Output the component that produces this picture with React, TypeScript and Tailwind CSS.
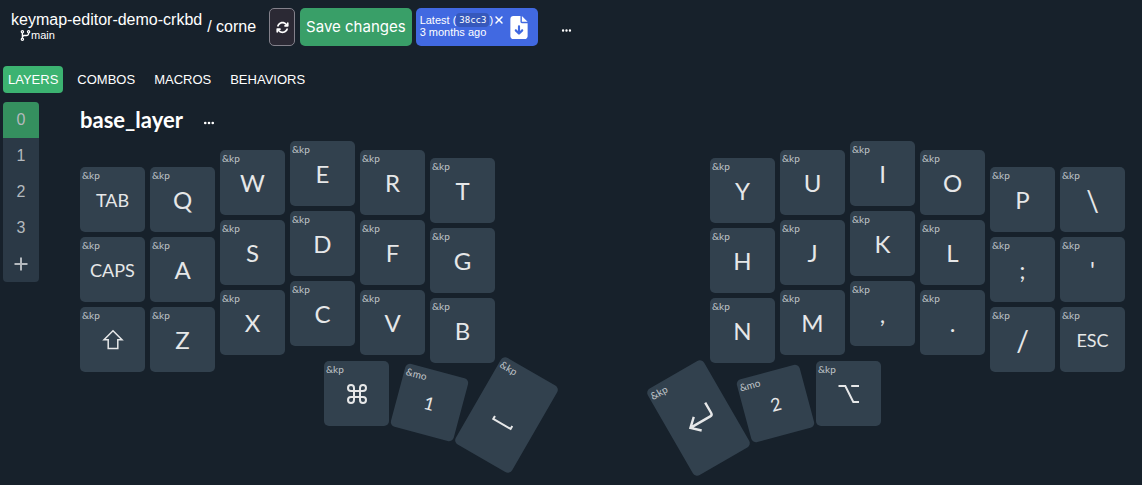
import type { ReactNode } from 'react';
import { FaArrowsRotate, FaCodeBranch, FaEllipsis, FaFileArrowDown, FaXmark } from 'react-icons/fa6';
import { Command } from 'lucide-react';

type KeyDef = {
  label: ReactNode;
  name: string;
  behavior?: string;
  size?: string;
  tall?: boolean;
  className?: string;
};

type Column = { offset: string; keys: KeyDef[] };

const key = (label: string, size?: string): KeyDef => ({ label, name: label, size });

function ShiftGlyph() {
  return (
    <svg className="size-6" viewBox="0 0 24 24" fill="none" stroke="currentColor" strokeWidth="1.5" aria-hidden="true">
      <path d="M12 2.8 21 11.8h-4.2v8.7H7.2v-8.7H3z" />
    </svg>
  );
}

function OptionGlyph() {
  return (
    <svg className="size-6" viewBox="0 0 24 24" fill="none" stroke="currentColor" strokeWidth="2" aria-hidden="true">
      <path d="M1.5 4h6.8l8 16H22M14.2 4H22" />
    </svg>
  );
}

function SpaceGlyph() {
  return (
    <svg className="size-6" viewBox="0 0 24 24" fill="none" stroke="currentColor" strokeWidth="2" aria-hidden="true">
      <path d="M2 18.6v3.4h20v-3.4" />
    </svg>
  );
}

function ReturnGlyph() {
  return (
    <svg className="size-8" viewBox="0 0 32 32" fill="none" stroke="currentColor" strokeWidth="2.4" aria-hidden="true">
      <path d="M29 6v12a2.5 2.5 0 0 1-2.5 2.5H4M12 12.6l-8.4 7.9 8.4 7.9" />
    </svg>
  );
}

const leftColumns: Column[] = [
  {
    offset: 'mt-[26px]',
    keys: [key('TAB', 'text-lg'), key('CAPS', 'text-lg'), { label: <ShiftGlyph />, name: 'Shift' }],
  },
  { offset: 'mt-[26px]', keys: [key('Q'), key('A'), key('Z')] },
  { offset: 'mt-[9px]', keys: [key('W'), key('S'), key('X')] },
  { offset: 'mt-0', keys: [key('E'), key('D'), key('C')] },
  { offset: 'mt-[9px]', keys: [key('R'), key('F'), key('V')] },
  { offset: 'mt-[17px]', keys: [key('T'), key('G'), key('B')] },
];

const rightColumns: Column[] = [
  { offset: 'mt-[17px]', keys: [key('Y'), key('H'), key('N')] },
  { offset: 'mt-[9px]', keys: [key('U'), key('J'), key('M')] },
  { offset: 'mt-0', keys: [key('I'), key('K'), key(',')] },
  { offset: 'mt-[9px]', keys: [key('O'), key('L'), key('.')] },
  { offset: 'mt-[26px]', keys: [key('P'), key(';'), key('/', 'text-[28px]')] },
  { offset: 'mt-[26px]', keys: [key('\\', 'text-[28px]'), key("'"), key('ESC', 'text-lg')] },
];

const leftThumbs: KeyDef[] = [
  { label: <Command className="size-6" strokeWidth={2} aria-hidden="true" />, name: 'Command' },
  { label: '1', name: 'Layer 1', behavior: '&mo', size: 'text-lg', className: 'mt-[9px] rotate-15' },
  { label: <SpaceGlyph />, name: 'Space', tall: true, className: 'ml-1 mt-1 rotate-30' },
];

const rightThumbs: KeyDef[] = [
  { label: <ReturnGlyph />, name: 'Return', tall: true, className: 'mr-1 mt-[7px] -rotate-30' },
  { label: '2', name: 'Layer 2', behavior: '&mo', size: 'text-lg', className: 'mt-[10px] -rotate-15' },
  { label: <OptionGlyph />, name: 'Option' },
];

function Key({ label, name, behavior = '&kp', size = 'text-2xl', tall, className = '' }: KeyDef) {
  return (
    <button
      type="button"
      aria-label={`${behavior} ${name}`}
      className={`relative flex w-[65px] shrink-0 items-center justify-center rounded-[5px] bg-[#32414e] text-[#e6e7e8] ${
        tall ? 'h-[100px]' : 'h-[65px]'
      } ${size} ${className}`}
    >
      <span className="absolute left-0.5 top-0.5 text-[10px] leading-3 text-[#c0c5c9]">{behavior}</span>
      {label}
    </button>
  );
}

function Columns({ columns }: { columns: Column[] }) {
  return (
    <div className="flex items-start gap-[5px]">
      {columns.map((column, i) => (
        <div key={i} className={`flex flex-col gap-[5px] ${column.offset}`}>
          {column.keys.map((k) => (
            <Key key={k.name} {...k} />
          ))}
        </div>
      ))}
    </div>
  );
}

function Header() {
  return (
    <header className="flex items-start pl-[11px] pt-2">
      <div className="pt-1">
        <a href="#repo" className="block text-base leading-4">keymap-editor-demo-crkbd</a>
        <a href="#branch" className="ml-[9px] flex items-center text-[11px] leading-[14px]">
          <FaCodeBranch className="size-[11px]" aria-hidden="true" />
          main
        </a>
      </div>
      <a href="#keyboard" className="ml-[5px] pt-2 text-base leading-[22px]">/ corne</a>
      <button
        type="button"
        aria-label="Refresh"
        className="ml-[13px] flex h-[38px] w-[26px] items-center justify-center rounded-[5px] border border-[#83818b] bg-[#2b2934]"
      >
        <FaArrowsRotate className="size-[13px]" />
      </button>
      <button
        type="button"
        className="ml-[5px] h-[38px] rounded-[5px] bg-[#399f68] px-1.5 font-['Inter',sans-serif] text-[15px]"
      >
        Save changes
      </button>
      <div className="ml-1 flex h-[38px] items-start gap-[5px] rounded-[5px] bg-[#4169e1] pl-1 pr-2.5 pt-1.5">
        <div className="text-[11px] leading-3">
          <div className="flex h-3 items-center">
            Latest (
            <code className="rounded bg-[#3658bb] px-[3px] font-['DejaVu_Sans_Mono',monospace] text-[9px] leading-[14px]">
              38cc3
            </code>
            )
            <button type="button" aria-label="Dismiss build">
              <FaXmark className="size-3" />
            </button>
          </div>
          <div>3 months ago</div>
        </div>
        <a href="#download" aria-label="Download firmware" className="pt-0.5">
          <FaFileArrowDown className="h-[23px] w-[18px]" />
        </a>
      </div>
      <button type="button" aria-label="More options" className="ml-[23px] mt-[17px]">
        <FaEllipsis className="size-[11px]" />
      </button>
    </header>
  );
}

const tabs = ['LAYERS', 'COMBOS', 'MACROS', 'BEHAVIORS'];
const layers = ['0', '1', '2', '3'];

export default function App() {
  return (
    <div className="min-h-screen overflow-x-hidden bg-[#17212b] font-['Liberation_Sans',Arial,sans-serif] text-white">
      <Header />
      <nav className="mt-5 flex gap-[9px] pl-[3px]">
        {tabs.map((tab, i) => (
          <button
            key={tab}
            type="button"
            className={`h-[27px] rounded px-[5px] text-[13px] ${i === 0 ? 'bg-[#3cb371]' : ''}`}
          >
            {tab}
          </button>
        ))}
      </nav>
      <main className="mt-[9px] flex items-start pl-[3px]">
        <div className="flex w-9 shrink-0 flex-col overflow-hidden rounded bg-[#2b3946] text-base text-[#b4b9be]">
          {layers.map((layer, i) => (
            <button key={layer} type="button" className={`h-9 ${i === 0 ? 'bg-[#35905f]' : ''}`}>
              {layer}
            </button>
          ))}
          <button type="button" aria-label="Add layer" className="flex h-9 items-center justify-center">
            <svg className="size-3.5" viewBox="0 0 14 14" stroke="currentColor" strokeWidth="2" aria-hidden="true">
              <path d="M7 .5v13M.5 7h13" />
            </svg>
          </button>
        </div>
        <section className="ml-[41px] font-['Lato',sans-serif]">
          <div className="flex h-[39px] items-start gap-5">
            <h1 className="text-[22px] font-bold leading-9">base_layer</h1>
            <button type="button" aria-label="Layer options" className="pt-[15px]">
              <FaEllipsis className="size-3" />
            </button>
          </div>
          <div className="flex items-start gap-[125px]">
            <div className="flex w-[460px] flex-col items-start">
              <Columns columns={leftColumns} />
              <div className="-mt-[11px] ml-[244px] flex items-start gap-2">
                {leftThumbs.map((k) => (
                  <Key key={k.name} {...k} />
                ))}
              </div>
            </div>
            <div className="flex w-[460px] flex-col items-end">
              <Columns columns={rightColumns} />
              <div className="-mt-[11px] mr-[244px] flex items-start gap-2">
                {rightThumbs.map((k) => (
                  <Key key={k.name} {...k} />
                ))}
              </div>
            </div>
          </div>
        </section>
      </main>
    </div>
  );
}
